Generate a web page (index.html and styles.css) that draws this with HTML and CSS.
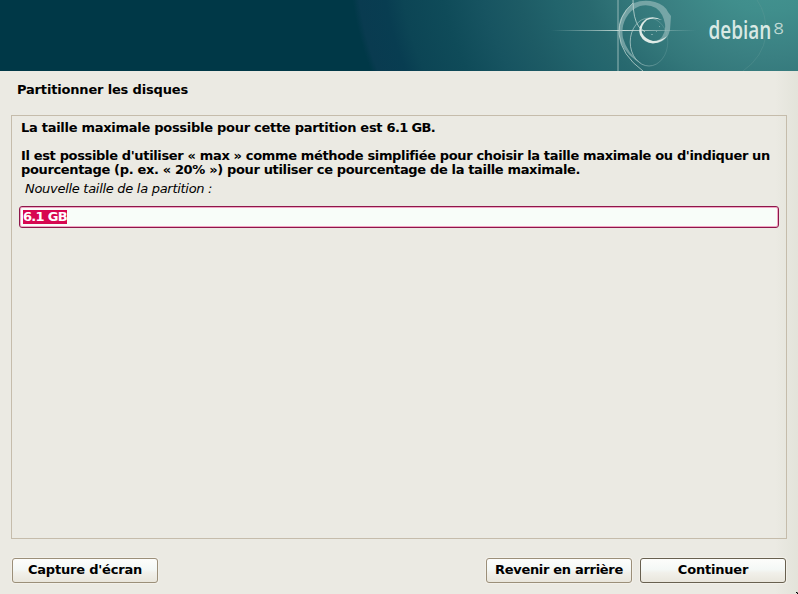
FILE: index.html
```html
<!DOCTYPE html>
<html lang="fr">
<head>
<meta charset="utf-8">
<title>Partitionner les disques</title>
<link rel="stylesheet" href="styles.css">
</head>
<body>
<div class="installer">
  <header class="banner">
    <svg class="banner-art" width="798" height="71" viewBox="0 0 798 71" role="img" aria-label="debian 8">
      <defs>
        <linearGradient id="beam"><stop offset="0" stop-color="#b9d4cf" stop-opacity="0"/><stop offset=".5" stop-color="#dce9e4" stop-opacity=".9"/><stop offset="1" stop-color="#b9d4cf" stop-opacity="0"/></linearGradient>
        <linearGradient id="fade" x1="0" x2="1"><stop offset="0" stop-color="#c4dad7" stop-opacity=".7"/><stop offset="1" stop-color="#9fc3c1" stop-opacity=".15"/></linearGradient>
      </defs>
      <path d="M757 0Q767 14 766 35Q763 57 743 71" fill="none" stroke="#69a09b" stroke-opacity=".3"/>
      <path d="M618 0V71" stroke="#8cb0b1" stroke-opacity=".55" stroke-width="2"/>
      <rect x="551" y="30" width="145" height="1" fill="url(#beam)"/>
      <path d="M634 3Q644 -1 655 2Q665 5 668 12L671 16L670 30Q668 40 658 43L651 43Q658 41 662 37Q666 31 665 24Q663 13 656 8Q649 4 640 6Q631 9 626 18Q621 27 623 38Q627 53 642 64Q627 56 621 43Q617 31 620 20Q625 8 634 3Z" fill="#9dbfbe" fill-opacity=".62"/>
      <path d="M633 3Q618 16 619 34Q621 55 643 71" fill="none" stroke="#bcd3d0" stroke-opacity=".8"/>
      <path d="M633 0Q633 19 639 27L645 32" fill="none" stroke="#c2d8d5" stroke-opacity=".8"/>
      <ellipse cx="649" cy="42" rx="18.8" ry="24" fill="none" stroke="url(#fade)"/>
      <path d="M662 20Q653 15 646 19Q637 26 640 35Q644 43 653 43.5Q662 43 667 36Q661 41 653 41Q645 39 642 33Q640 26 647 20Q653 17 662 20Z" fill="#e0ebe7"/>
      <path d="M651 34h2v1h-2zM656 31h1v1h-1zM659 26h1v1h-1z" fill="#a7c5c3" fill-opacity=".6"/>
      <text class="logo-word" transform="translate(708.5 39) scale(.73 1)">debian</text>
      <text class="logo-version" transform="translate(773.5 34) scale(1.2 1)">8</text>
    </svg>
  </header>
  <h1 class="title">Partitionner les disques</h1>
  <main class="panel">
    <p class="description">La taille maximale possible pour cette partition est <span class="size">6.1 GB.</span></p>
    <p class="description second">Il est possible d'utiliser « max » comme méthode simplifiée pour choisir la taille maximale ou d'indiquer un<br>pourcentage (p. ex. « 20% ») pour utiliser ce pourcentage de la taille maximale.</p>
    <p class="label">Nouvelle taille de la partition :</p>
    <div class="field"><span class="selection">6.1 GB</span></div>
  </main>
  <footer class="actions">
    <button class="button capture">Capture d'écran</button>
    <button class="button back">Revenir en arrière</button>
    <button class="button default">Continuer</button>
  </footer>
  <svg class="pointer" width="2" height="2" viewBox="0 0 2 2"><path d="M0 0h1l1 1v1H1V1H0z" fill="#000"/></svg>
</div>
</body>
</html>
```
FILE: styles.css
```css
* { box-sizing: border-box; }
body {
  margin: 0;
  font: bold 13px/14px "DejaVu Sans", sans-serif;
  color: #000;
}
.installer {
  position: relative;
  display: flex;
  flex-direction: column;
  width: 798px;
  height: 594px;
  overflow: hidden;
  background: linear-gradient(90deg, #ebeae3 775px, #e3e3da 798px);
}
.banner {
  height: 71px;
  background:
    radial-gradient(ellipse 440px 370px at 770px -40px, #459692 0, #408e8c 14%, #3a8082 26%, #33777a 34%, #28696f 43%, #22646c 50%, #1d5b65 58%, #175461 66%, #0f4b59 75%, #0c4555 84%, #083d51 88%, #093b50 94%, #003847 95.5%);
}
.banner-art { display: block; }
.logo-word {
  font: 600 26px "Open Sans", sans-serif;
  fill: #d9e9e4;
}
.logo-version { font: 300 15px "Open Sans", sans-serif; fill: #c9dfda; stroke: #c9dfda; stroke-width: .3px; }
.title {
  margin: 12px 0 0 17px;
  font-size: 13px;
  line-height: 14px;
  letter-spacing: -.17px;
}
.panel {
  height: 424px;
  margin: 18px 11px 0;
  padding: 5px 7px;
  border: 1px solid #c5bcab;
}
.description {
  margin: 0 2px;
  letter-spacing: -.28px;
  white-space: nowrap;
}
.size { letter-spacing: -.65px; }
.second { margin-top: 14px; letter-spacing: -.35px; }
.label {
  margin: 5px 0 0 6px;
  font-weight: normal;
  font-style: oblique;
  letter-spacing: -.29px;
}
.field {
  height: 22px;
  margin-top: 10px;
  padding: 3px;
  border: 1px solid #8d174a;
  border-radius: 3px;
  background: #f8fdf9;
  box-shadow: inset 0 0 0 1px #f1a5c3;
}
.selection {
  display: block;
  width: 44px;
  height: 14px;
  background: #d70751;
  color: #fff;
  letter-spacing: -.7px;
  white-space: nowrap;
}
.actions {
  display: flex;
  gap: 8px;
  margin: 19px 12px 0;
}
.button {
  width: 146px;
  height: 25px;
  padding: 0 0 2px;
  border: 1px solid #9b8f79;
  border-radius: 3px;
  background: linear-gradient(#fdfdfb, #f4f8f6 45%, #f1f0ea 60%, #e9e6dc);
  box-shadow: 0 0 0 1px #f2f0e9;
  color: #000;
  font: inherit;
  letter-spacing: -.2px;
  white-space: nowrap;
}
.capture { margin-right: auto; }
.back { letter-spacing: -.31px; }
.default { border-color: #68604f; }
.pointer { position: absolute; right: 0; bottom: 0; }
```
